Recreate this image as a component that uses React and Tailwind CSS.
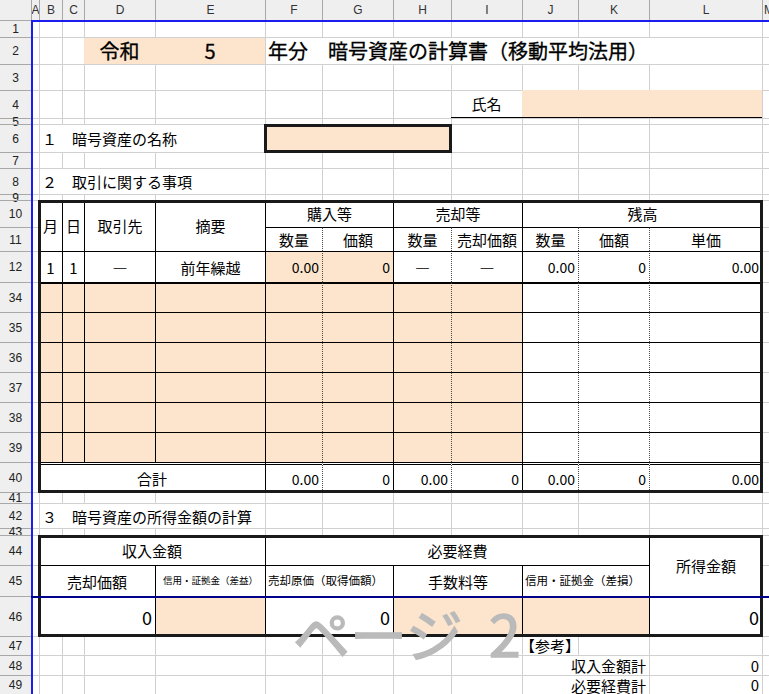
import React from "react";

const C = { A: "col-start-2", B: "col-start-3", C: "col-start-4", D: "col-start-5", E: "col-start-6", F: "col-start-7", G: "col-start-8", H: "col-start-9", I: "col-start-10", J: "col-start-11", K: "col-start-12", L: "col-start-13", M: "col-start-14" };
const CE = { A: "col-end-3", B: "col-end-4", C: "col-end-5", D: "col-end-6", E: "col-end-7", F: "col-end-8", G: "col-end-9", H: "col-end-10", I: "col-end-11", J: "col-end-12", K: "col-end-13", L: "col-end-14", M: "col-end-15" };
const R = { 1: "row-start-2", 2: "row-start-3", 3: "row-start-4", 4: "row-start-5", 5: "row-start-6", 6: "row-start-7", 7: "row-start-8", 8: "row-start-9", 9: "row-start-10", 10: "row-start-11", 11: "row-start-12", 12: "row-start-13", 34: "row-start-14", 35: "row-start-15", 36: "row-start-16", 37: "row-start-17", 38: "row-start-18", 39: "row-start-19", 40: "row-start-20", 41: "row-start-21", 42: "row-start-22", 43: "row-start-23", 44: "row-start-24", 45: "row-start-25", 46: "row-start-26", 47: "row-start-27", 48: "row-start-28", 49: "row-start-29" };
const RE = { 1: "row-end-3", 2: "row-end-4", 3: "row-end-5", 4: "row-end-6", 5: "row-end-7", 6: "row-end-8", 7: "row-end-9", 8: "row-end-10", 9: "row-end-11", 10: "row-end-12", 11: "row-end-13", 12: "row-end-14", 34: "row-end-15", 35: "row-end-16", 36: "row-end-17", 37: "row-end-18", 38: "row-end-19", 39: "row-end-20", 40: "row-end-21", 41: "row-end-22", 42: "row-end-23", 43: "row-end-24", 44: "row-end-25", 45: "row-end-26", 46: "row-end-27", 47: "row-end-28", 48: "row-end-29", 49: "row-end-30" };

const at = (c1, c2, r1, r2) => `${C[c1]} ${CE[c2]} ${R[r1]} ${RE[r2 || r1]}`;

const ROWS = [1, 2, 3, 4, 5, 6, 7, 8, 9, 10, 11, 12, 34, 35, 36, 37, 38, 39, 40, 41, 42, 43, 44, 45, 46, 47, 48, 49];
const LETTERS = ["A", "B", "C", "D", "E", "F", "G", "H", "I", "J", "K", "L", "M"];

const PE = "bg-[#fde4cc]";
const base = "flex items-center whitespace-nowrap leading-none";
const LS = "border-l border-l-black";
const LD = "border-l border-l-[#4a4a4a] [border-left-style:dotted]";
const TS = "border-t border-t-black";
const CEN = "justify-center";
const RT = "justify-end pr-[3px]";
const GL = "border-l border-t border-[#d0d0d0]";
const TITLE = "text-[20px] [-webkit-text-stroke:0.3px_black]";

// left border style per column inside table 2
const LEFT2 = { B: "", C: LS, D: LS, E: LS, F: LS, G: LD, H: LS, I: LD, J: LS, K: LD, L: LD };
const COLS2 = ["B", "C", "D", "E", "F", "G", "H", "I", "J", "K", "L"];
const PEACH2 = { B: 1, C: 1, D: 1, E: 1, F: 1, G: 1, H: 1, I: 1 };

const row12 = [
  { c: "B", t: "1", a: CEN },
  { c: "C", t: "1", a: CEN },
  { c: "D", t: "―", a: CEN },
  { c: "E", t: "前年繰越", a: CEN },
  { c: "F", t: "0.00", a: RT, p: true, n: true },
  { c: "G", t: "0", a: RT, p: true, n: true },
  { c: "H", t: "―", a: CEN },
  { c: "I", t: "―", a: CEN },
  { c: "J", t: "0.00", a: RT, n: true },
  { c: "K", t: "0", a: RT, n: true },
  { c: "L", t: "0.00", a: RT, n: true },
];

const row40 = [
  { c: "F", t: "0.00" },
  { c: "G", t: "0" },
  { c: "H", t: "0.00" },
  { c: "I", t: "0" },
  { c: "J", t: "0.00" },
  { c: "K", t: "0" },
  { c: "L", t: "0.00" },
];

export default function App() {
  return (
    <div className="relative w-[769px] h-[694px] overflow-hidden bg-white text-black font-['Noto_Sans_CJK_JP',sans-serif]">
      <div className="grid grid-cols-[31px_8px_23px_22px_71px_110px_57px_71px_58px_71px_56px_71px_113px_7px] grid-rows-[20px_17px_27px_26px_28px_6px_28px_16px_26px_6px_27px_24px_31px_30px_30px_30px_30px_30px_30px_30px_11px_25px_7px_30px_31px_40px_19px_20px_19px]">
        {/* headers */}
        <div className="col-start-1 row-start-1 row-end-30 bg-[#efefef]" />
        {LETTERS.map((l) => (
          <div
            key={"h" + l}
            className={`${C[l]} row-start-1 border-l border-[#a8a8a8] bg-[#efefef] flex items-center ${l === "M" ? "justify-start pl-px" : "justify-center"} overflow-hidden text-[12px] text-[#333] font-['Liberation_Sans',sans-serif]`}
          >
            {l}
          </div>
        ))}
        {ROWS.map((r) => (
          <div
            key={"r" + r}
            className={`col-start-1 ${R[r]} border-t border-[#a8a8a8] flex items-center justify-center leading-none text-[12px] text-[#222] font-['Liberation_Sans',sans-serif]`}
          >
            {r}
          </div>
        ))}

        {/* gridlines */}
        {ROWS.map((r) =>
          LETTERS.map((l) => <div key={"g" + r + l} className={`${C[l]} ${R[r]} ${GL}`} />)
        )}

        {/* title */}
        <div className={`${at("D", "D", 2)} ${base} ${CEN} ${PE} border-t border-[#d0d0d0] ${TITLE}`}>令和</div>
        <div className={`${at("E", "E", 2)} ${base} ${CEN} ${PE} border-t border-[#d0d0d0] ${TITLE}`}>5</div>
        <div className={`${at("F", "L", 2)} ${base} bg-white ${GL} pl-[2px] ${TITLE}`}>
          年分　暗号資産の計算書（移動平均法用）
        </div>

        <div className={`${at("I", "I", 4)} ${base} ${CEN} border-b border-b-black text-[15px]`}>氏名</div>
        <div className={`${at("J", "L", 4)} ${PE} border-b border-b-black`} />

        <div className={`${at("B", "E", 6)} ${base} bg-white ${GL} pl-[2px] text-[15px]`}>１　暗号資産の名称</div>
        <div className={`${at("F", "H", 6)} ${PE} -mx-px -mb-px border-[3px] border-[#1a1a1a]`} />

        <div className={`${at("B", "E", 8)} ${base} bg-white ${GL} pl-[2px] text-[15px]`}>２　取引に関する事項</div>

        {/* table 2 header */}
        <div className={`${at("B", "B", 10, 11)} ${base} ${CEN} bg-white text-[15px]`}>月</div>
        <div className={`${at("C", "C", 10, 11)} ${base} ${CEN} bg-white ${LS} text-[15px]`}>日</div>
        <div className={`${at("D", "D", 10, 11)} ${base} ${CEN} bg-white ${LS} text-[15px]`}>取引先</div>
        <div className={`${at("E", "E", 10, 11)} ${base} ${CEN} bg-white ${LS} text-[15px]`}>摘要</div>
        <div className={`${at("F", "G", 10)} ${base} ${CEN} bg-white ${LS} text-[15px]`}>購入等</div>
        <div className={`${at("H", "I", 10)} ${base} ${CEN} bg-white ${LS} text-[15px]`}>売却等</div>
        <div className={`${at("J", "L", 10)} ${base} ${CEN} bg-white ${LS} text-[15px]`}>残高</div>
        <div className={`${at("F", "F", 11)} ${base} ${CEN} bg-white ${LS} ${TS} text-[15px]`}>数量</div>
        <div className={`${at("G", "G", 11)} ${base} ${CEN} bg-white ${LD} ${TS} text-[15px]`}>価額</div>
        <div className={`${at("H", "H", 11)} ${base} ${CEN} bg-white ${LS} ${TS} text-[15px]`}>数量</div>
        <div className={`${at("I", "I", 11)} ${base} ${CEN} bg-white ${LD} ${TS} text-[15px]`}>売却価額</div>
        <div className={`${at("J", "J", 11)} ${base} ${CEN} bg-white ${LS} ${TS} text-[15px]`}>数量</div>
        <div className={`${at("K", "K", 11)} ${base} ${CEN} bg-white ${LD} ${TS} text-[15px]`}>価額</div>
        <div className={`${at("L", "L", 11)} ${base} ${CEN} bg-white ${LD} ${TS} text-[15px]`}>単価</div>

        {row12.map((d) => (
          <div
            key={"a" + d.c}
            className={`${at(d.c, d.c, 12)} ${base} ${d.a} ${d.p ? PE : "bg-white"} ${LEFT2[d.c]} ${TS} ${d.n ? "text-[14px]" : "text-[15px]"}`}
          >
            {d.t}
          </div>
        ))}

        {[34, 35, 36, 37, 38, 39].map((r) =>
          COLS2.map((c) => (
            <div
              key={"b" + r + c}
              className={`${at(c, c, r)} ${PEACH2[c] ? PE : "bg-white"} ${LEFT2[c]} ${r === 34 ? "border-t-2 border-t-black" : TS}`}
            />
          ))
        )}

        <div className={`${at("B", "E", 40)} ${base} ${CEN} bg-white border-t-[3px] border-t-black [border-top-style:double] text-[15px]`}>合計</div>
        {row40.map((d) => (
          <div
            key={"c" + d.c}
            className={`${at(d.c, d.c, 40)} ${base} ${RT} bg-white ${LEFT2[d.c]} border-t-[3px] border-t-black [border-top-style:double] text-[14px]`}
          >
            {d.t}
          </div>
        ))}
        <div className={`${at("B", "L", 10, 40)} -mx-px -mb-px border-[3px] border-[#1a1a1a] pointer-events-none`} />

        {/* section 3 */}
        <div className={`${at("B", "E", 42)} ${base} bg-white ${GL} pl-[2px] text-[15px]`}>３　暗号資産の所得金額の計算</div>

        <div className={`${at("B", "E", 44)} ${base} ${CEN} bg-white text-[15px]`}>収入金額</div>
        <div className={`${at("F", "K", 44)} ${base} ${CEN} bg-white ${LS} text-[15px]`}>必要経費</div>
        <div className={`${at("L", "L", 44, 45)} ${base} ${CEN} bg-white ${LS} text-[15px]`}>所得金額</div>
        <div className={`${at("B", "D", 45)} ${base} ${CEN} bg-white ${TS} text-[15px]`}>売却価額</div>
        <div className={`${at("E", "E", 45)} ${base} ${CEN} bg-white ${LS} ${TS} text-[9.5px]`}>信用・証拠金（差益）</div>
        <div className={`${at("F", "G", 45)} ${base} bg-white ${LS} ${TS} pl-[2px] text-[11.5px]`}>売却原価（取得価額）</div>
        <div className={`${at("H", "I", 45)} ${base} ${CEN} bg-white ${LS} ${TS} text-[15px]`}>手数料等</div>
        <div className={`${at("J", "K", 45)} ${base} bg-white ${LS} ${TS} pl-[2px] text-[11.5px]`}>信用・証拠金（差損）</div>

        <div className={`${at("B", "D", 46)} ${base} ${RT} bg-white ${TS} text-[18px]`}>0</div>
        <div className={`${at("E", "E", 46)} ${PE} ${LS} ${TS}`} />
        <div className={`${at("F", "G", 46)} ${base} ${RT} bg-white ${LS} ${TS} text-[18px]`}>0</div>
        <div className={`${at("H", "I", 46)} ${PE} ${LS} ${TS}`} />
        <div className={`${at("J", "K", 46)} ${PE} ${LS} ${TS}`} />
        <div className={`${at("L", "L", 46)} ${base} ${RT} bg-white ${LS} ${TS} text-[18px]`}>0</div>
        <div className={`${at("B", "L", 44, 46)} -mx-px -mb-px border-[3px] border-[#1a1a1a] pointer-events-none`} />

        <div className={`${at("J", "J", 47)} ${base} ${CEN} text-[15px]`}>【参考】</div>
        <div className={`${at("J", "K", 48)} ${base} ${RT} bg-white ${GL} text-[15px]`}>収入金額計</div>
        <div className={`${at("L", "L", 48)} ${base} ${RT} text-[15px]`}>0</div>
        <div className={`${at("J", "K", 49)} ${base} ${RT} bg-white ${GL} text-[15px]`}>必要経費計</div>
        <div className={`${at("L", "L", 49)} ${base} ${RT} text-[15px]`}>0</div>

        {/* page break lines */}
        <div className={`${at("A", "M", 1)} border-t-2 border-t-[#1c1cf0] pointer-events-none`} />
        <div className={`${at("A", "A", 1, 49)} border-l-2 border-l-[#1c1cf0] pointer-events-none`} />
        <div className={`${at("A", "M", 46)} border-t-2 border-t-[#00008b] pointer-events-none`} />
      </div>

      <div className="absolute left-[293px] top-[604px] text-[57px] leading-none text-[#bababa] [-webkit-text-stroke:1.5px_#bababa] whitespace-nowrap pointer-events-none">
        ページ<span className="ml-[26px]">2</span>
      </div>
    </div>
  );
}
